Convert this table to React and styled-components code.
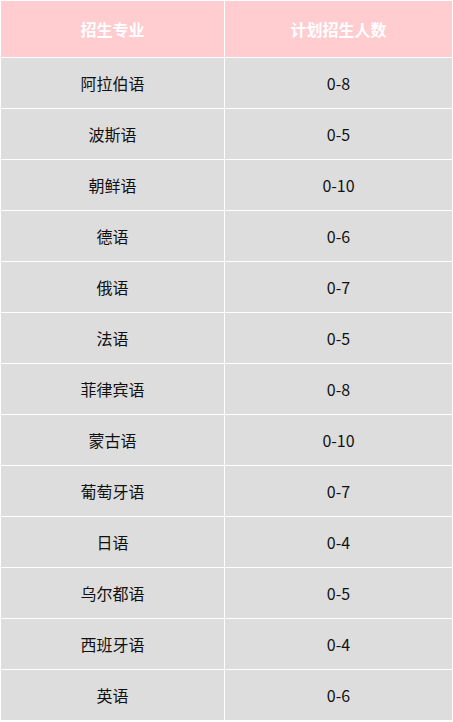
import React from "react";
import styled, { createGlobalStyle } from "styled-components";

const Global = createGlobalStyle`
  html, body { margin: 0; padding: 0; background: #ffffff; }
  body { font-family: "Noto Sans CJK SC", "Noto Sans", sans-serif; }
`;

const Table = styled.table`
  width: 453px;
  border-collapse: separate;
  border-spacing: 1px;
  background: #ffffff;
  table-layout: fixed;
`;

const HeadCell = styled.th`
  height: 56px;
  padding: 0;
  background: #ffccd0;
  color: #ffffff;
  font-size: 16px;
  font-weight: 700;
  text-align: center;
  vertical-align: middle;
  width: ${(p) => p.$w}px;
`;

const Cell = styled.td`
  height: 50px;
  padding: 0;
  background: #dddddd;
  color: #111111;
  font-size: 16px;
  text-align: center;
  vertical-align: middle;
`;

const rows = [
  ["阿拉伯语", "0-8"],
  ["波斯语", "0-5"],
  ["朝鲜语", "0-10"],
  ["德语", "0-6"],
  ["俄语", "0-7"],
  ["法语", "0-5"],
  ["菲律宾语", "0-8"],
  ["蒙古语", "0-10"],
  ["葡萄牙语", "0-7"],
  ["日语", "0-4"],
  ["乌尔都语", "0-5"],
  ["西班牙语", "0-4"],
  ["英语", "0-6"],
];

export default function App() {
  return (
    <>
      <Global />
      <Table>
        <thead>
          <tr>
            <HeadCell $w={223}>招生专业</HeadCell>
            <HeadCell $w={227}>计划招生人数</HeadCell>
          </tr>
        </thead>
        <tbody>
          {rows.map(([name, num]) => (
            <tr key={name}>
              <Cell>{name}</Cell>
              <Cell>{num}</Cell>
            </tr>
          ))}
        </tbody>
      </Table>
    </>
  );
}
